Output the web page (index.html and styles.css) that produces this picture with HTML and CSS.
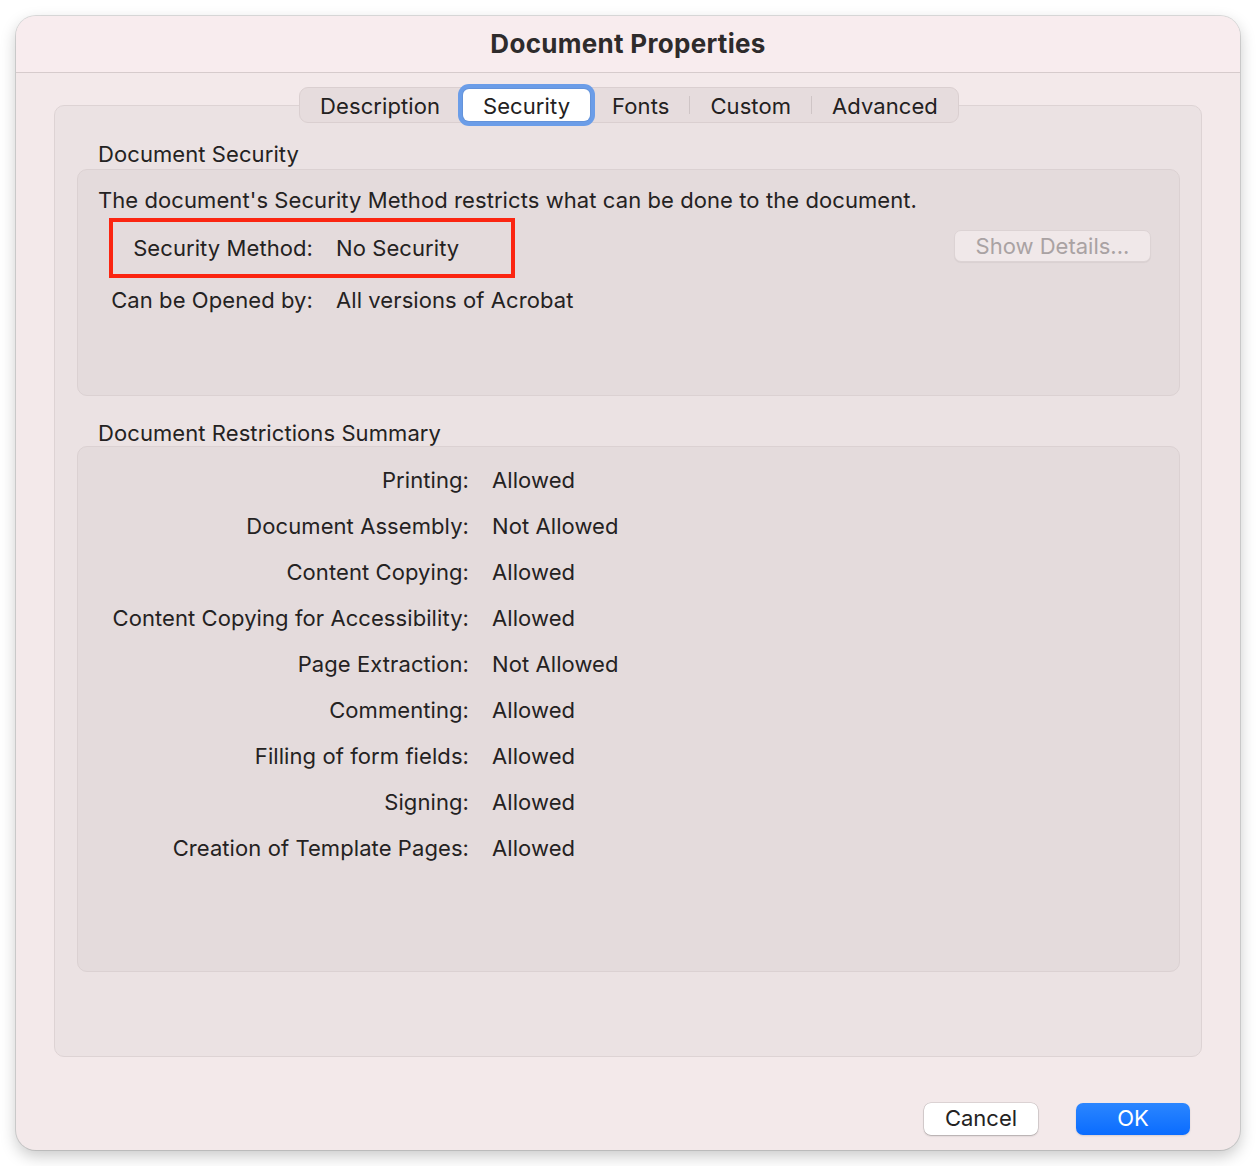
FILE: index.html
```html
<!DOCTYPE html>
<html>
<head>
<meta charset="utf-8">
<link rel="stylesheet" href="styles.css">
</head>
<body>
<div class="window">
  <div class="titlebar">Document Properties</div>
  <div class="content">
    <div class="tabs">
      <div class="tab">Description</div>
      <div class="tab selected">Security</div>
      <div class="tab">Fonts</div>
      <div class="sep"></div>
      <div class="tab">Custom</div>
      <div class="sep"></div>
      <div class="tab">Advanced</div>
    </div>
    <div class="panel">
      <div class="group-label">Document Security</div>
      <div class="box box-security">
        <div class="intro">The document's Security Method restricts what can be done to the document.</div>
        <div class="method-row">
          <div class="highlight">
            <span class="key">Security Method:</span>
            <span class="val">No Security</span>
          </div>
          <button class="btn-details">Show Details...</button>
        </div>
        <div class="open-row">
          <span class="key">Can be Opened by:</span>
          <span class="val">All versions of Acrobat</span>
        </div>
      </div>
      <div class="group-label second">Document Restrictions Summary</div>
      <div class="box box-summary">
        <div class="grid">
          <span class="k">Printing:</span><span class="v">Allowed</span>
          <span class="k">Document Assembly:</span><span class="v">Not Allowed</span>
          <span class="k">Content Copying:</span><span class="v">Allowed</span>
          <span class="k">Content Copying for Accessibility:</span><span class="v">Allowed</span>
          <span class="k">Page Extraction:</span><span class="v">Not Allowed</span>
          <span class="k">Commenting:</span><span class="v">Allowed</span>
          <span class="k">Filling of form fields:</span><span class="v">Allowed</span>
          <span class="k">Signing:</span><span class="v">Allowed</span>
          <span class="k">Creation of Template Pages:</span><span class="v">Allowed</span>
        </div>
      </div>
    </div>
    <div class="footer">
      <button class="btn btn-cancel">Cancel</button>
      <button class="btn btn-ok">OK</button>
    </div>
  </div>
</div>
</body>
</html>
```
FILE: styles.css
```css
* { box-sizing: border-box; }
html, body {
  margin: 0;
  padding: 0;
  background: #ffffff;
}
body {
  width: 1256px;
  height: 1166px;
  padding: 16px;
  font-family: Inter, "Noto Sans", "Liberation Sans", sans-serif;
  color: #242222;
  font-size: 22px;
  letter-spacing: 0.08px;
  overflow: hidden;
}
.window {
  width: 1224px;
  height: 1134px;
  border-radius: 20px;
  background: #f3e9ea;
  box-shadow: 0 0 0 1px rgba(0,0,0,0.12), 0 6px 16px rgba(0,0,0,0.22);
  overflow: hidden;
  display: flex;
  flex-direction: column;
}
.titlebar {
  height: 57px;
  flex: none;
  background: #f8ecee;
  border-bottom: 1px solid #d6cbcc;
  display: flex;
  align-items: center;
  justify-content: center;
  font-weight: 700;
  font-size: 26px;
  letter-spacing: 0.3px;
  color: #2e2b2b;
  padding-bottom: 2px;
}
.content {
  flex: 1;
  display: flex;
  flex-direction: column;
  padding: 14px 38px 0 38px;
}
.tabs {
  align-self: center;
  position: relative;
  z-index: 1;
  height: 36px;
  display: flex;
  align-items: center;
  background: #e6dcdd;
  border: 1px solid #dacfd0;
  border-radius: 9px;
  margin-left: 2px;
  margin-bottom: -18px;
  padding-top: 2px;
}
.tab {
  height: 32px;
  line-height: 32px;
  padding: 0 20px;
  color: #232121;
}
.tab.selected {
  background: #ffffff;
  border-radius: 6px;
  height: 32px;
  line-height: 32px;
  margin-top: -2px;
  padding-top: 1px;
  box-shadow: 0 0 0 1px rgba(0,0,0,0.06), 0 0 0 5px #6b9de8;
  margin-left: 3px;
  margin-right: 2px;
}
.sep {
  width: 1px;
  height: 18px;
  margin-top: -2px;
  background: #cfc5c6;
}
.panel {
  height: 952px;
  flex: none;
  background: #ebe2e3;
  border: 1px solid #ddd3d4;
  border-radius: 10px;
  padding: 35px 21px 0 22px;
  display: flex;
  flex-direction: column;
}
.group-label {
  line-height: 26px;
  padding-left: 21px;
  margin-bottom: 2px;
}
.group-label.second {
  margin-top: 24px;
  margin-bottom: 0;
}
.box {
  background: #e4dbdc;
  border: 1px solid #dbd1d2;
  border-radius: 10px;
}
.box-security {
  height: 227px;
  padding: 17px 20px 0 20px;
}
.intro {
  line-height: 26px;
}
.method-row {
  display: flex;
  align-items: center;
  justify-content: space-between;
  margin-top: 5px;
  padding-right: 8px;
}
.highlight {
  width: 406px;
  height: 60px;
  margin-left: 11px;
  border: 4px solid #fb2511;
  display: flex;
  align-items: center;
}
.key {
  width: 200px;
  flex: none;
  display: flex;
  justify-content: flex-end;
  white-space: nowrap;
}
.val {
  margin-left: 23px;
  white-space: nowrap;
}
.open-row {
  display: flex;
  align-items: center;
  line-height: 26px;
  margin-top: 9px;
  margin-left: 15px;
}
.btn-details {
  font: inherit;
  width: 197px;
  height: 32px;
  padding: 0;
  margin-top: -4px;
  background: #f0e8e9;
  color: #a9a2a3;
  border: 1px solid #dcd3d4;
  border-radius: 7px;
  box-shadow: 0 1px 1px rgba(0,0,0,0.05);
}
.box-summary {
  height: 526px;
  padding: 20px 20px 0 20px;
}
.grid {
  display: grid;
  grid-template-columns: 371px auto;
  column-gap: 23px;
  row-gap: 20px;
  line-height: 26px;
}
.k { text-align: right; }
.footer {
  display: flex;
  justify-content: flex-end;
  gap: 38px;
  padding: 46px 12px 0 0;
}
.btn {
  font: inherit;
  width: 114px;
  height: 32px;
  border-radius: 7px;
  padding: 0;
  border: none;
  padding-bottom: 2px;
}
.btn-cancel {
  background: #ffffff;
  color: #242222;
  box-shadow: 0 0 0 0.5px rgba(0,0,0,0.18), 0 1px 2px rgba(0,0,0,0.2);
}
.btn-ok {
  background: linear-gradient(#2b86ff, #0a6cff);
  color: #ffffff;
  box-shadow: 0 1px 2px rgba(0,0,0,0.12);
}
```
